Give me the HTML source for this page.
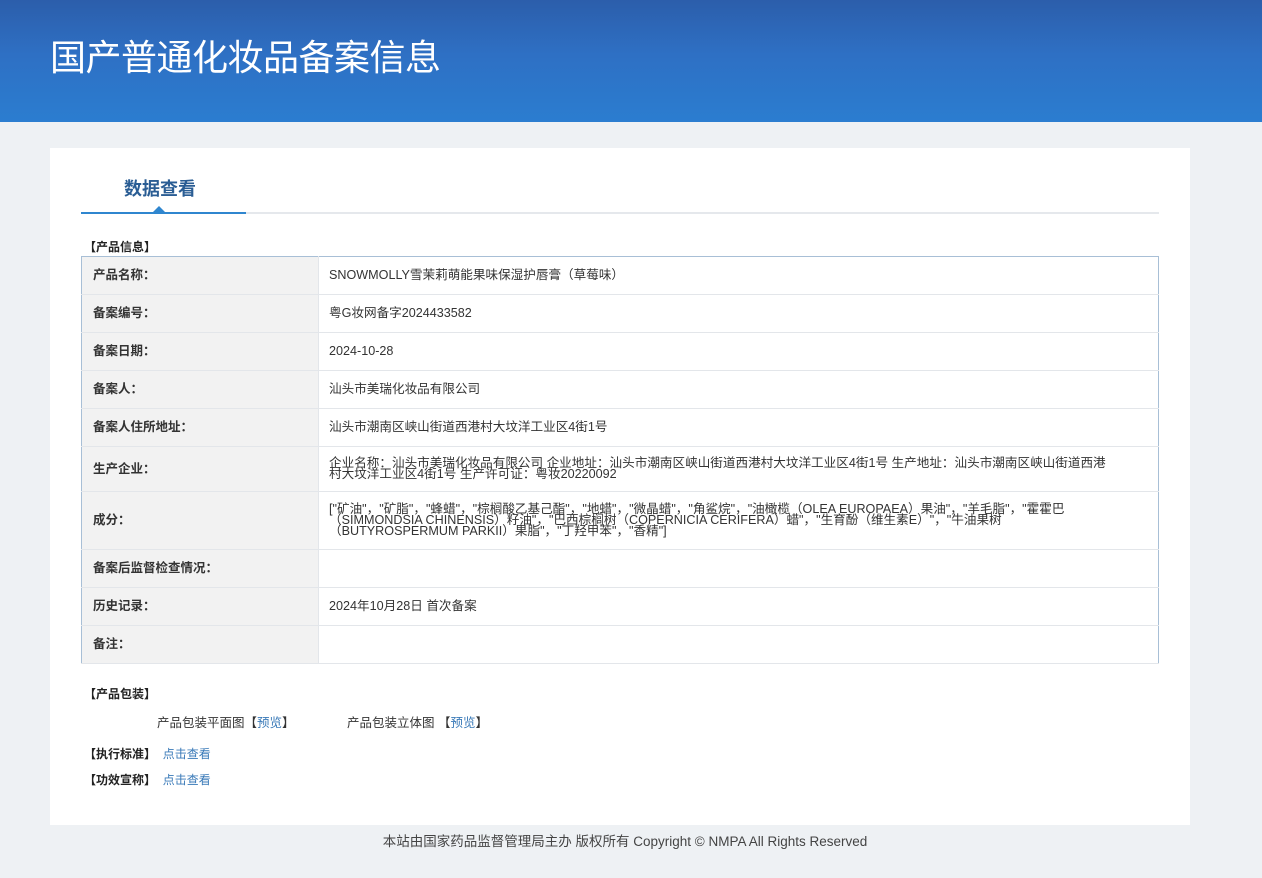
<!DOCTYPE html>
<html><head><meta charset="utf-8"><style>
*{margin:0;padding:0;box-sizing:border-box}
body{width:1262px;height:878px;background:#eef1f4;font-family:"Liberation Sans","Noto Sans CJK SC",sans-serif;font-size:12px;color:#333;position:relative;overflow:hidden}
.hd{position:absolute;left:0;top:0;width:1262px;height:122px;background:linear-gradient(180deg,#2c5eab 0%,#2e70c4 45%,#2b7dd0 100%)}
.hd h1{position:absolute;left:50px;top:29px;font-size:36px;font-weight:normal;color:#fff;font-family:"Noto Sans CJK SC",sans-serif;letter-spacing:-0.5px}
.card{position:absolute;left:50px;top:148px;width:1140px;height:677px;background:#fff}
.tab{position:absolute;left:124px;top:175px;font-size:18px;font-weight:bold;color:#2a5d94;font-family:"Noto Sans CJK SC",sans-serif}
.line{position:absolute;left:81px;top:212px;width:1078px;height:2px;background:#e5e8ec}
.line2{position:absolute;left:81px;top:212px;width:165px;height:2px;background:#2f86cf}
.tri{position:absolute;left:153px;top:206px;width:0;height:0;border-left:6px solid transparent;border-right:6px solid transparent;border-bottom:6px solid #2f86cf}
.sec{position:absolute;font-weight:bold;color:#222;font-size:12px;font-family:"Noto Sans CJK SC",sans-serif}
table{position:absolute;left:81px;top:256px;width:1078px;border-collapse:collapse;border:1px solid #a8bfd6}
td{border-bottom:1px solid #e3e6ea;vertical-align:middle;font-size:12.6px;line-height:11px}
td.l{width:237px;background:#f2f2f2;padding-left:11px;font-weight:bold;color:#333;border-right:1px solid #e3e6ea;font-size:12.5px}
td.v{padding-left:10px;color:#333}
a{color:#3a7ab8;text-decoration:none}
.ft{position:absolute;left:0;top:830px;width:1262px;text-align:center;font-size:13.5px;color:#444;padding-right:12px}
</style></head><body>
<div class="hd"><h1>国产普通化妆品备案信息</h1></div>
<div class="card"></div>
<div class="tab">数据查看</div>
<div class="line"></div><div class="line2"></div><div class="tri"></div>
<div class="sec" style="left:84px;top:238px">【产品信息】</div>
<table>
<tr style="height:38px"><td class="l">产品名称：</td><td class="v">SNOWMOLLY雪茉莉萌能果味保湿护唇膏（草莓味）</td></tr>
<tr style="height:38px"><td class="l">备案编号：</td><td class="v">粤G妆网备字2024433582</td></tr>
<tr style="height:38px"><td class="l">备案日期：</td><td class="v">2024-10-28</td></tr>
<tr style="height:38px"><td class="l">备案人：</td><td class="v">汕头市美瑞化妆品有限公司</td></tr>
<tr style="height:38px"><td class="l">备案人住所地址：</td><td class="v">汕头市潮南区峡山街道西港村大坟洋工业区4街1号</td></tr>
<tr style="height:45px"><td class="l">生产企业：</td><td class="v" style="padding-right:50px">企业名称：汕头市美瑞化妆品有限公司 企业地址：汕头市潮南区峡山街道西港村大坟洋工业区4街1号 生产地址：汕头市潮南区峡山街道西港村大坟洋工业区4街1号 生产许可证：粤妆20220092</td></tr>
<tr style="height:58px"><td class="l">成分：</td><td class="v" style="padding-right:60px">["矿油"，"矿脂"，"蜂蜡"，"棕榈酸乙基己酯"，"地蜡"，"微晶蜡"，"角鲨烷"，"油橄榄（OLEA EUROPAEA）果油"，"羊毛脂"，"霍霍巴（SIMMONDSIA CHINENSIS）籽油"，"巴西棕榈树（COPERNICIA CERIFERA）蜡"，"生育酚（维生素E）"，"牛油果树（BUTYROSPERMUM PARKII）果脂"，"丁羟甲苯"，"香精"]</td></tr>
<tr style="height:38px"><td class="l">备案后监督检查情况：</td><td class="v"></td></tr>
<tr style="height:38px"><td class="l">历史记录：</td><td class="v">2024年10月28日 首次备案</td></tr>
<tr style="height:38px"><td class="l">备注：</td><td class="v"></td></tr>
</table>
<div class="sec" style="left:84px;top:685px">【产品包装】</div>
<div style="position:absolute;left:157px;top:712px;font-size:12.5px">产品包装平面图【<a>预览</a>】</div>
<div style="position:absolute;left:347px;top:712px;font-size:12.5px">产品包装立体图 【<a>预览</a>】</div>
<div class="sec" style="left:84px;top:745px">【执行标准】 <a style="font-weight:normal;margin-left:4px">点击查看</a></div>
<div class="sec" style="left:84px;top:771px">【功效宣称】 <a style="font-weight:normal;margin-left:4px">点击查看</a></div>
<div class="ft">本站由国家药品监督管理局主办 版权所有 Copyright © NMPA All Rights Reserved</div>
</body></html>
